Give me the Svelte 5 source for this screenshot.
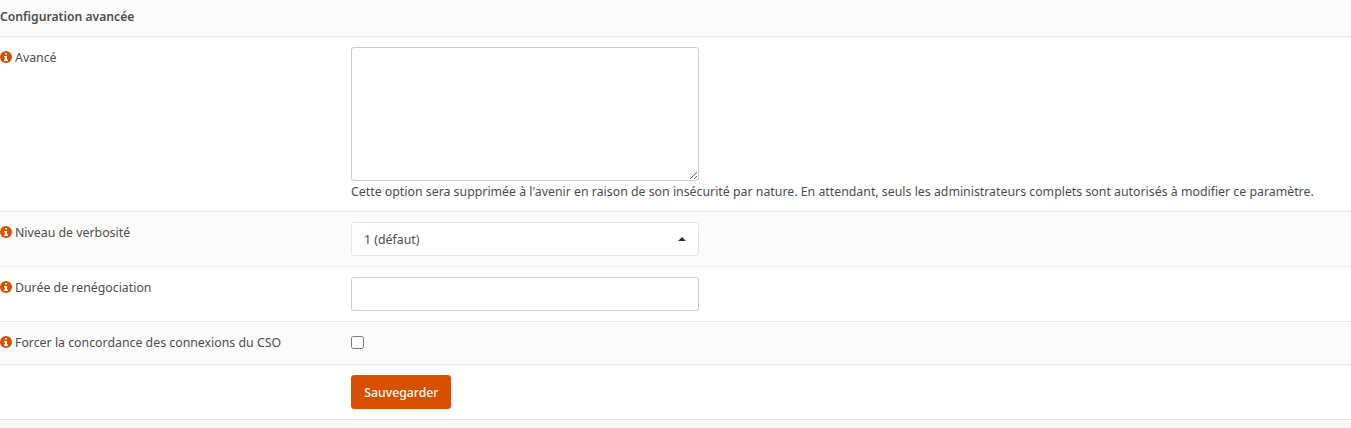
<script>
  const rows = [
    { kind: 'area', label: 'Avancé' },
    { kind: 'select', label: 'Niveau de verbosité' },
    { kind: 'input', label: 'Durée de renégociation' },
    { kind: 'check', label: 'Forcer la concordance des connexions du CSO' },
    { kind: 'save', label: '' }
  ];
</script>

<main>
  <div class="row heading"><strong>Configuration avancée</strong></div>
  {#each rows as row}
    <div class="row {row.kind}">
      <div class="label">
        {#if row.label}
          <svg viewBox="0 0 12 12"><circle cx="6" cy="6" r="6" fill="#d94f00" /><path d="M5 2h2v1.5H5zM4 5h3v3.5h1V10H4V8.5h1v-2H4z" fill="#fff" /></svg>
          <span class="narrow">{row.label}</span>
        {/if}
      </div>
      <div class="field">
        {#if row.kind === 'area'}
          <textarea aria-label={row.label}></textarea>
          <p><span class="narrow">Cette option sera supprimée à l'avenir en raison de son insécurité par nature. En attendant, seuls les administrateurs complets sont autorisés à modifier ce paramètre.</span></p>
        {:else if row.kind === 'select'}
          <button class="picker"><span class="narrow">1 (défaut)</span><i></i></button>
        {:else if row.kind === 'input'}
          <input type="text" aria-label={row.label} />
        {:else if row.kind === 'check'}
          <input type="checkbox" aria-label={row.label} />
        {:else}
          <button class="primary"><span>Sauvegarder</span></button>
        {/if}
      </div>
    </div>
  {/each}
  <div class="row foot"></div>
</main>

<style>
  :global(body) { overflow: hidden; background: #fff; }
  * { box-sizing: border-box; }
  main { height: 428px; overflow: hidden; font: 13px/20px "Source Sans Pro", "Noto Sans", sans-serif; color: #4c4c4c; }
  .row { display: flex; border-top: 1px solid #e9e9e9; padding-top: 10px; white-space: nowrap; }
  .row:nth-child(odd) { background: #fbfbfb; }
  .heading { height: 36px; border-top: 0; padding-top: 6px; }
  .area { height: 175px; }
  .select, .input, .save { height: 55px; }
  .check { height: 43px; }
  .row.foot { height: 9px; background: #f7f7f7; border-color: #e2e2e2; }
  strong { font-weight: 600; transform: scaleX(0.937); transform-origin: 0 50%; }
  .narrow { display: inline-block; transform: scaleX(0.9485); transform-origin: 0 50%; }
  .label { width: 351px; flex: none; display: flex; gap: 2.5px; }
  .label svg { width: 12px; height: 12px; margin-top: 4px; }
  .field { flex: none; width: 1000px; }
  textarea, input[type="text"], .picker { display: block; width: 348px; height: 34px; margin: 0; border: 1px solid #ccc; border-radius: 3px; background: #fff; }
  textarea { height: 134px; }
  p { margin: 0; }
  .picker { display: flex; align-items: center; justify-content: space-between; padding: 0 12px; font: inherit; color: inherit; border-color: #e5e5e5; }
  i { border: 4px solid transparent; border-top: 0; border-bottom-color: #333; }
  input[type="checkbox"] { display: block; width: 13px; height: 13px; margin: 4px 0 0; }
  .primary { display: block; width: 100px; height: 34px; padding: 0; border: 1px solid #d94f00; border-radius: 3px; background: #d94f00; color: #fff; font: inherit; font-weight: 500; }
  .primary span { display: inline-block; transform: scaleX(0.94); }
</style>
